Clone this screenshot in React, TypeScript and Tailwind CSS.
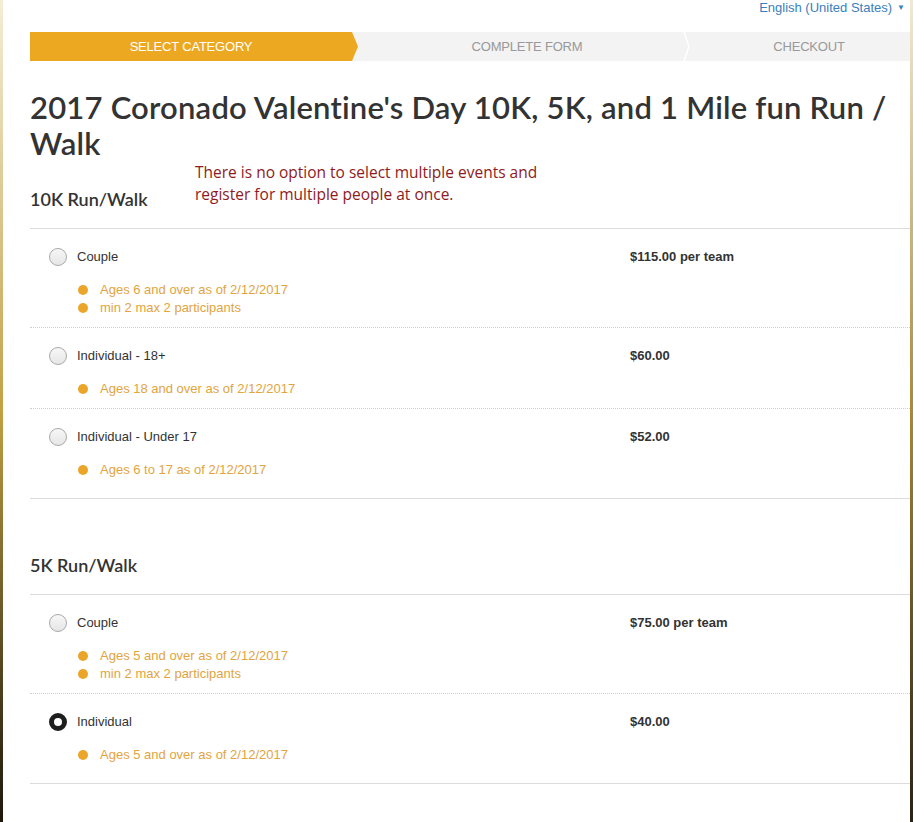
import React from "react";

interface Option {
  label: string;
  price: string;
  notes: string[];
  selected?: boolean;
}

interface Section {
  title: string;
  options: Option[];
}

const sections: Section[] = [
  {
    title: "10K Run/Walk",
    options: [
      {
        label: "Couple",
        price: "$115.00 per team",
        notes: ["Ages 6 and over as of 2/12/2017", "min 2 max 2 participants"],
      },
      {
        label: "Individual - 18+",
        price: "$60.00",
        notes: ["Ages 18 and over as of 2/12/2017"],
      },
      {
        label: "Individual - Under 17",
        price: "$52.00",
        notes: ["Ages 6 to 17 as of 2/12/2017"],
      },
    ],
  },
  {
    title: "5K Run/Walk",
    options: [
      {
        label: "Couple",
        price: "$75.00 per team",
        notes: ["Ages 5 and over as of 2/12/2017", "min 2 max 2 participants"],
      },
      {
        label: "Individual",
        price: "$40.00",
        notes: ["Ages 5 and over as of 2/12/2017"],
        selected: true,
      },
    ],
  },
];

const Radio = ({ selected }: { selected?: boolean }) =>
  selected ? (
    <span className="block h-[18px] w-[18px] rounded-full border-[5px] border-[#1e1e1e] bg-white" />
  ) : (
    <span className="block h-[18px] w-[18px] rounded-full border border-[#a9a9a9] bg-gradient-to-b from-[#f7f7f7] to-[#e6e6e6]" />
  );

const OptionRow = ({ option, last }: { option: Option; last: boolean }) => (
  <div
    className={`flex pt-[19px] ${
      last ? "pb-[19px]" : "pb-[10px] border-b border-dotted border-[#cfcfcf]"
    }`}
  >
    <div className="w-[600px] flex flex-col">
      <div className="flex items-center h-[18px] pl-[19px] gap-[10px]">
        <Radio selected={option.selected} />
        <span className="text-[13px] text-[#333]">{option.label}</span>
      </div>
      <ul className="mt-[15px] pl-[48px] flex flex-col">
        {option.notes.map((note) => (
          <li key={note} className="flex items-center h-[18px] gap-[12px]">
            <span className="h-[10px] w-[10px] rounded-full bg-[#eba52a]" />
            <span className="text-[13px] text-[#e2a43e]">{note}</span>
          </li>
        ))}
      </ul>
    </div>
    <div className="h-[18px] flex items-center text-[13px] font-bold text-[#333]">
      {option.price}
    </div>
  </div>
);

export default function App() {
  return (
    <div className="flex min-h-[822px] w-full bg-white font-['Liberation_Sans',Arial,sans-serif]">
      <div className="w-[3px] shrink-0 bg-gradient-to-b from-[#f4eed6] via-[#c2a043] to-[#1d170c]" />
      <main className="relative flex-1 pl-[27px] pb-[40px]">
        <div className="flex justify-end items-center h-[15px] pr-[5px] text-[13px] text-[#3a80bd]">
          English (United States)
          <span className="ml-[5px] text-[8px] text-[#3a80bd]">▼</span>
        </div>

        <div className="relative mt-[17px] flex h-[29px] text-[13px] tracking-[-0.2px] uppercase">
          <div className="w-[328px] flex items-center justify-center pr-[6px] bg-[#eda822] text-white [clip-path:polygon(0_0,calc(100%-6px)_0,100%_50%,calc(100%-6px)_100%,0_100%)]">
            Select Category
          </div>
          <div className="-ml-[6px] flex-1 flex bg-[#f3f3f3] text-[#999]">
            <div className="w-[330px] flex items-center justify-center pl-[20px]">
              Complete Form
            </div>
            <div className="relative flex-1 flex items-center justify-center pl-[26px]">
              <svg
                className="absolute left-0 top-0"
                width="10"
                height="29"
                viewBox="0 0 10 29"
              >
                <path d="M2 0 L7 14.5 L2 29" fill="none" stroke="#ffffff" strokeWidth="1.5" />
              </svg>
              Checkout
            </div>
          </div>
        </div>

        <h1 className="mt-[28px] text-[31px] leading-[36px] tracking-[0.2px] font-semibold text-[#333] font-['Lato',sans-serif]">
          2017 Coronado Valentine's Day 10K, 5K, and 1 Mile fun Run / Walk
        </h1>

        <p className="absolute left-[192px] top-[161px] text-[15.5px] leading-[22px] text-[#8e1b21] font-['Open_Sans',sans-serif]">
          There is no option to select multiple events and
          <br />
          register for multiple people at once.
        </p>

        {sections.map((section, i) => (
          <section key={section.title} className={i === 0 ? "mt-[26px]" : "mt-[54px]"}>
            <h2 className="text-[18px] leading-[24px] font-semibold text-[#333] font-['Lato',sans-serif] mb-[17px]">
              {section.title}
            </h2>
            <div className="border-t border-b border-[#dcdcdc]">
              {section.options.map((option, idx) => (
                <OptionRow
                  key={option.label}
                  option={option}
                  last={idx === section.options.length - 1}
                />
              ))}
            </div>
          </section>
        ))}
      </main>
      <div className="w-[3px] shrink-0 bg-gradient-to-b from-[#f1ead0] via-[#a98a30] to-[#2b2212]" />
    </div>
  );
}
